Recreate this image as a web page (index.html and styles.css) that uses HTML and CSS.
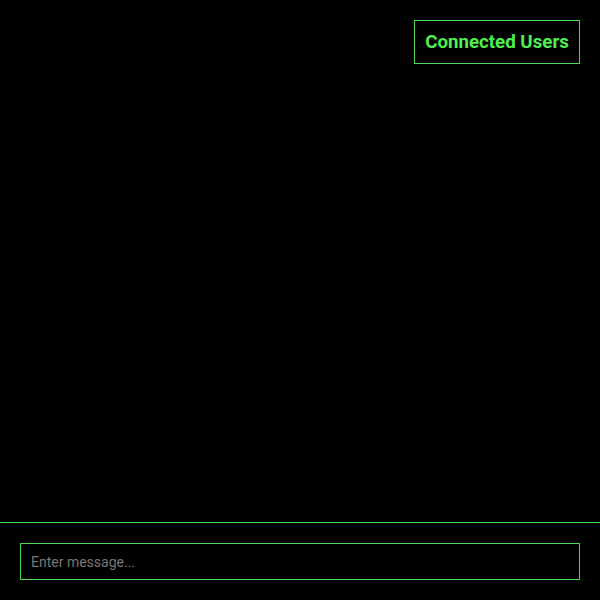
FILE: index.html
```html
<!DOCTYPE html>
<html>
<head>
<meta charset="utf-8">
<link rel="stylesheet" href="styles.css">
</head>
<body>
<div class="app">
  <header class="top">
    <button class="users-btn">Connected Users</button>
  </header>
  <main class="messages"></main>
  <footer class="composer">
    <input class="msg-input" type="text" placeholder="Enter message...">
  </footer>
</div>
</body>
</html>
```
FILE: styles.css
```css
html, body {
  margin: 0;
  padding: 0;
  background: #000;
  height: 100%;
}
.app {
  display: flex;
  flex-direction: column;
  height: 600px;
  font-family: Roboto, "Liberation Sans", sans-serif;
}
.top {
  display: flex;
  justify-content: flex-end;
  padding: 20px 20px 0 20px;
}
.users-btn {
  box-sizing: border-box;
  height: 44px;
  width: 166px;
  padding: 0 8px;
  background: #000;
  border: 1px solid #4cd44c;
  color: #4ef04e;
  font-family: Roboto, "Liberation Sans", sans-serif;
  font-weight: 700;
  font-size: 18.72px;
  cursor: pointer;
}
.messages {
  flex: 1;
}
.composer {
  border-top: 1px solid #4cd44c;
  padding: 20px;
  display: flex;
}
.msg-input {
  box-sizing: border-box;
  flex: 1;
  height: 37px;
  padding: 0 10px;
  background: #000;
  border: 1px solid #4cd44c;
  color: #ccc;
  font-family: Roboto, "Liberation Sans", sans-serif;
  font-size: 14px;
  outline: none;
}
.msg-input::placeholder {
  color: #777;
}
```
